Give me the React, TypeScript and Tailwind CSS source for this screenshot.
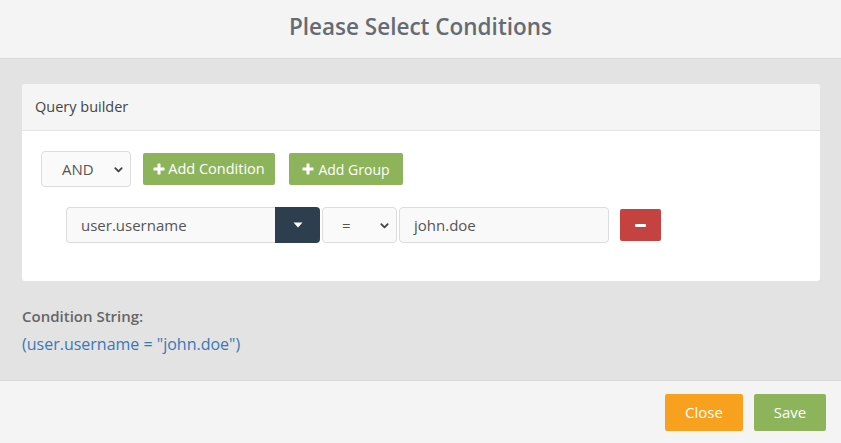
import React from "react";

const Chevron = () => (
  <svg width="11" height="11" viewBox="0 0 12 12" fill="none" stroke="#444" strokeWidth="2" strokeLinecap="round" strokeLinejoin="round">
    <path d="M2.5 4.5 L6 8 L9.5 4.5" />
  </svg>
);

const Plus = () => (
  <svg width="12" height="12" viewBox="0 0 12 12" fill="white">
    <rect x="4.5" y="0.5" width="3" height="11" rx="0.5" />
    <rect x="0.5" y="4.5" width="11" height="3" rx="0.5" />
  </svg>
);

export default function App() {
  return (
    <div className="w-[841px] h-[443px] flex flex-col bg-[#f4f4f4] text-[#555]" style={{ fontFamily: '"Open Sans", sans-serif' }}>
      <div className="h-[59px] shrink-0 flex items-center justify-center border-b border-[#dadada] bg-[#f4f4f4]">
        <h1 className="text-[22.5px] font-semibold text-[#656b73] -mt-[5px]">Please Select Conditions</h1>
      </div>
      <div className="h-[321px] shrink-0 bg-[#e3e3e3] pt-[25px] pl-[22px] pr-[21px]">
        <div className="bg-white rounded-[3px]">
          <div className="h-[47px] flex items-center px-[13px] bg-[#f5f5f5] border-b border-[#e4e4e4] rounded-t-[3px] text-[14.5px] text-[#444]">
            Query builder
          </div>
          <div className="h-[150px] pt-[20px] pl-[19px]">
            <div className="flex items-center h-[36px]">
              <div className="w-[90px] h-[36px] bg-[#fafafa] border border-[#dcdcdc] rounded-[4px] flex items-center justify-between pl-[20px] pr-[6px] text-[15px] text-[#555]">
                <span>AND</span>
                <Chevron />
              </div>
              <button className="ml-[12px] w-[132px] h-[32px] bg-[#8db45b] rounded-[2px] flex items-center justify-center gap-[3px] text-white text-[14.5px]">
                <Plus />
                <span>Add Condition</span>
              </button>
              <button className="ml-[14px] w-[114px] h-[32px] bg-[#8db45b] rounded-[2px] flex items-center justify-center gap-[4px] text-white text-[14px]">
                <Plus />
                <span>Add Group</span>
              </button>
            </div>
            <div className="flex items-center mt-[20px] ml-[25px] h-[36px]">
              <div className="flex h-[36px]">
                <div className="w-[209px] h-[36px] bg-[#f9f9f9] border border-[#dcdcdc] border-r-0 rounded-l-[4px] flex items-center pl-[14px] text-[15px] text-[#555]">
                  user.username
                </div>
                <div className="w-[45px] h-[36px] bg-[#2d3e4f] rounded-r-[4px] flex items-center justify-center">
                  <svg width="10" height="6" viewBox="0 0 10 6" fill="white">
                    <path d="M0.5 0.5 L9.5 0.5 L5 5.5 Z" />
                  </svg>
                </div>
              </div>
              <div className="ml-[2px] w-[75px] h-[36px] bg-[#fafafa] border border-[#dcdcdc] rounded-[4px] flex items-center justify-between pl-[19px] pr-[6px] text-[15px] text-[#555]">
                <span>=</span>
                <Chevron />
              </div>
              <div className="ml-[2px] w-[210px] h-[36px] bg-[#f9f9f9] border border-[#dcdcdc] rounded-[4px] flex items-center pl-[14px] text-[15px] text-[#555]">
                john.doe
              </div>
              <button className="ml-[11px] w-[41px] h-[32px] bg-[#c4423f] rounded-[2px] flex items-center justify-center">
                <span className="block w-[11px] h-[3px] bg-white rounded-[1px]" />
              </button>
            </div>
          </div>
        </div>
        <div className="mt-[24px] text-[15px] font-semibold text-[#666]">Condition String:</div>
        <div className="mt-[4px] text-[16px] text-[#3a78b5]">(user.username = "john.doe")</div>
      </div>
      <div className="flex-1 border-t border-[#d8d8d8] bg-[#f4f4f4] flex justify-end items-start pt-[13px] pr-[15px] gap-[11px]">
        <button className="w-[78px] h-[37px] bg-[#f8a11f] rounded-[2px] text-white text-[15px]">Close</button>
        <button className="w-[72px] h-[37px] bg-[#8db45b] rounded-[2px] text-white text-[15px]">Save</button>
      </div>
    </div>
  );
}
